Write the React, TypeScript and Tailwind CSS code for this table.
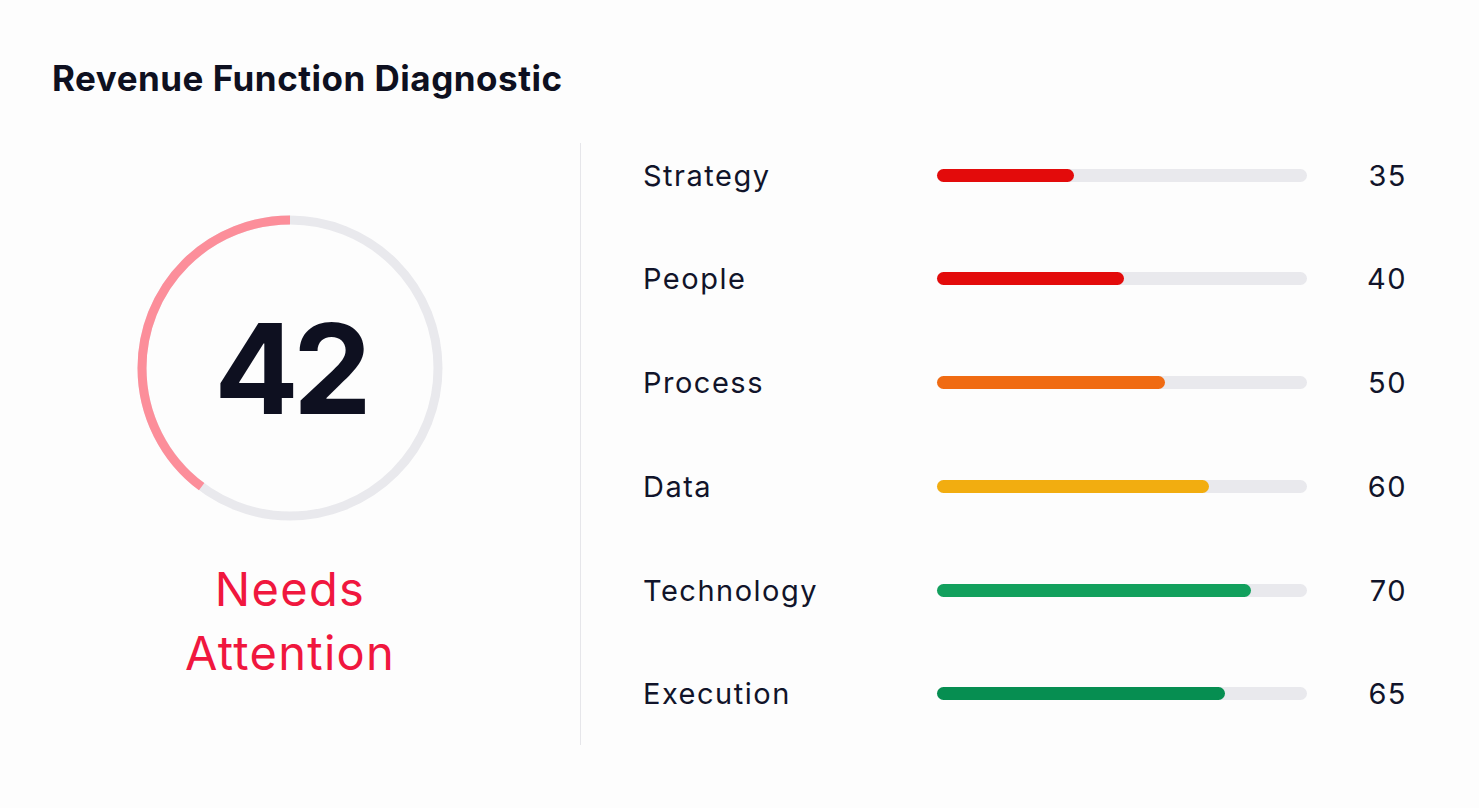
import React from "react";

interface Pillar {
  label: string;
  score: number;
  fill: number; // bar fill in percent
  color: string;
}

const PILLARS: Pillar[] = [
  { label: "Strategy", score: 35, fill: 37, color: "bg-[#e30b0b]" },
  { label: "People", score: 40, fill: 50.5, color: "bg-[#e30b0b]" },
  { label: "Process", score: 50, fill: 61.6, color: "bg-[#f06b12]" },
  { label: "Data", score: 60, fill: 73.5, color: "bg-[#f2ad10]" },
  { label: "Technology", score: 70, fill: 84.9, color: "bg-[#12a05d]" },
  { label: "Execution", score: 65, fill: 77.8, color: "bg-[#068e51]" },
];

function ScoreRing({ score, arc }: { score: number; arc: number }) {
  const r = 148;
  const c = 2 * Math.PI * r;
  const dash = arc * c;
  return (
    <div className="relative h-[306px] w-[306px]">
      <svg viewBox="0 0 306 306" className="h-full w-full">
        <circle cx="153" cy="153" r={r} fill="none" stroke="#e9e9ed" strokeWidth="9" />
        {/* progress runs counter-clockwise from 12 o'clock */}
        <circle
          cx="153"
          cy="153"
          r={r}
          fill="none"
          stroke="#fc8e9a"
          strokeWidth="9"
          strokeDasharray={`${dash} ${c}`}
          transform="translate(306 0) scale(-1 1) rotate(-90 153 153)"
        />
      </svg>
      <div className="absolute inset-0 flex items-center justify-center">
        <span className="text-[125px] font-bold leading-none tracking-[-6px] text-[#0e1020]">{score}</span>
      </div>
    </div>
  );
}

export default function App() {
  return (
    <div className="min-h-screen w-full bg-[#fdfdfd] font-['Inter',sans-serif] text-[#10132a]">
      <div className="pl-[52px] pt-[58px]">
        <h1 className="text-[35px] font-bold leading-[40px] tracking-[0.5px] text-[#0e1020]">
          Revenue Function Diagnostic
        </h1>
      </div>

      <div className="mt-[45px] flex">
        {/* Overall score */}
        <div className="flex h-[602px] w-[581px] flex-col items-center border-r border-[#e6e6ea] pt-[72px]">
          <ScoreRing score={42} arc={0.398} />
          <p className="mt-[36px] text-center text-[47px] font-normal leading-[64px] tracking-[1.3px] text-[#f0173e]">
            Needs
            <br />
            Attention
          </p>
        </div>

        {/* Pillar bars */}
        <div className="flex flex-col gap-[39.8px] pl-[62px]">
          {PILLARS.map((p) => (
            <div key={p.label} className="flex h-16 items-center">
              <span className="w-[294px] text-[29px] leading-none tracking-[1.5px] text-[#11142a]">{p.label}</span>
              <div className="h-[13px] w-[370px] rounded-full bg-[#e9e9ed]">
                <div className={`h-full rounded-full ${p.color}`} style={{ width: `${p.fill}%` }} />
              </div>
              <span className="w-[100px] text-right text-[29px] leading-none tracking-[1.5px] text-[#11142a]">
                {p.score}
              </span>
            </div>
          ))}
        </div>
      </div>
    </div>
  );
}
